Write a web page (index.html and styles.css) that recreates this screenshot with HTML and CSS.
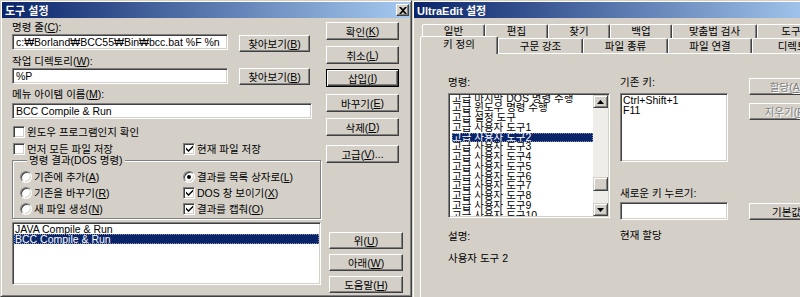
FILE: index.html
```html
<!DOCTYPE html>
<html lang="ko">
<head>
  <meta charset="UTF-8" />
  <title>도구 설정 / UltraEdit 설정</title>
  <link rel="stylesheet" href="styles.css">
</head>
<body>
  <div class="window tool-dlg">
    <div class="titlebar">
      <span>도구 설정</span>
      <span class="close-btn">
        <svg width="8" height="7" viewBox="0 0 8 7"><path d="M0 0h2l2 2 2-2h2L5 3.5 8 7H6L4 5 2 7H0l3-3.5z" fill="#000"/></svg>
      </span>
    </div>
    <div class="tool-body">
      <div class="tool-main">
        <div class="lbl first-lbl">명령 줄(<u>C</u>):</div>
        <div class="field-row">
          <div class="field path-field">c:₩Borland₩BCC55₩Bin₩bcc.bat %F %n</div>
          <div class="btn browse-btn first-browse">찾아보기(<u>B</u>)</div>
        </div>
        <div class="lbl dir-lbl">작업 디렉토리(<u>W</u>):</div>
        <div class="field-row">
          <div class="field path-field">%P</div>
          <div class="btn browse-btn">찾아보기(<u>B</u>)</div>
        </div>
        <div class="lbl name-lbl">메뉴 아이템 이름(<u>M</u>):</div>
        <div class="field name-field">BCC Compile &amp; Run</div>

        <div class="check-row first-check">
          <div class="opt"><span class="cb"></span>윈도우 프로그램인지 확인</div>
        </div>
        <div class="check-row second-check">
          <div class="opt"><span class="cb"></span>먼저 모든 파일 저장</div>
          <div class="opt"><span class="cb"><svg width="7" height="7" viewBox="0 0 7 7"><path d="M0 2.5l2.5 2.5L7 0.5v2L2.5 7 0 4.5z" fill="#000"/></svg></span>현재 파일 저장</div>
        </div>

        <fieldset class="result-group">
          <legend>명령 결과(DOS 명령)</legend>
          <div class="opt-row">
            <div class="opt"><span class="radio"></span>기존에 추가(<u>A</u>)</div>
            <div class="opt"><span class="radio on"></span>결과를 목록 상자로(<u>L</u>)</div>
          </div>
          <div class="opt-row">
            <div class="opt"><span class="radio"></span>기존을 바꾸기(<u>R</u>)</div>
            <div class="opt"><span class="cb"><svg width="7" height="7" viewBox="0 0 7 7"><path d="M0 2.5l2.5 2.5L7 0.5v2L2.5 7 0 4.5z" fill="#000"/></svg></span>DOS 창 보이기(<u>X</u>)</div>
          </div>
          <div class="opt-row">
            <div class="opt"><span class="radio"></span>새 파일 생성(<u>N</u>)</div>
            <div class="opt"><span class="cb"><svg width="7" height="7" viewBox="0 0 7 7"><path d="M0 2.5l2.5 2.5L7 0.5v2L2.5 7 0 4.5z" fill="#000"/></svg></span>결과를 캡춰(<u>O</u>)</div>
          </div>
        </fieldset>

        <div class="listbox tool-list">
          <div class="list-item">JAVA Compile &amp; Run</div>
          <div class="list-item selected">BCC Compile &amp; Run</div>
        </div>
      </div>

      <div class="tool-buttons">
        <div class="btn ok-btn">확인(<u>K</u>)</div>
        <div class="btn gap6">취소(<u>L</u>)</div>
        <div class="btn default gap5">삽입(<u>I</u>)</div>
        <div class="btn gap7">바꾸기(<u>E</u>)</div>
        <div class="btn gap6">삭제(<u>D</u>)</div>
        <div class="btn gap9">고급(<u>V</u>)...</div>
        <div class="btn lower up-btn">위(<u>U</u>)</div>
        <div class="btn lower gap5">아래(<u>W</u>)</div>
        <div class="btn lower gap5">도움말(<u>H</u>)</div>
      </div>
    </div>
  </div>

  <div class="window ue-dlg">
    <div class="titlebar ue-title">
      <span>UltraEdit 설정</span>
    </div>
    <div class="tabs">
      <div class="tab-row back-row">
        <div class="tab w63">일반</div>
        <div class="tab w63">편집</div>
        <div class="tab w62">찾기</div>
        <div class="tab w62">백업</div>
        <div class="tab w85">맞춤법 검사</div>
        <div class="tab w90">도구 모음</div>
      </div>
      <div class="tab-row front-row">
        <div class="tab w78 active">키 정의</div>
        <div class="tab w85">구문 강조</div>
        <div class="tab w85">파일 종류</div>
        <div class="tab w84">파일 연결</div>
        <div class="tab w90">디렉토리</div>
      </div>
    </div>
    <div class="ue-panel">
      <div class="col cmd-col">
        <div class="lbl">명령:</div>
        <div class="listbox cmd-list">
          <div class="cmd-items">
            <div class="cmd-item">고급 마지막 DOS 명령 수행</div>
            <div class="cmd-item">고급 윈도우 명령 수행</div>
            <div class="cmd-item">고급 설정 도구</div>
            <div class="cmd-item">고급 사용자 도구1</div>
            <div class="cmd-item selected">고급 사용자 도구2</div>
            <div class="cmd-item">고급 사용자 도구3</div>
            <div class="cmd-item">고급 사용자 도구4</div>
            <div class="cmd-item">고급 사용자 도구5</div>
            <div class="cmd-item">고급 사용자 도구6</div>
            <div class="cmd-item">고급 사용자 도구7</div>
            <div class="cmd-item">고급 사용자 도구8</div>
            <div class="cmd-item">고급 사용자 도구9</div>
            <div class="cmd-item">고급 사용자 도구10</div>
          </div>
          <div class="scrollbar">
            <div class="sb-btn"><svg width="7" height="4" viewBox="0 0 7 4"><path d="M0 4L3.5 0 7 4z" fill="#000"/></svg></div>
            <div class="sb-track">
              <div class="sb-thumb"></div>
            </div>
            <div class="sb-btn"><svg width="7" height="4" viewBox="0 0 7 4"><path d="M0 0h7L3.5 4z" fill="#000"/></svg></div>
          </div>
        </div>
        <div class="lbl desc-lbl">설명:</div>
        <div class="lbl desc-text">사용자 도구 2</div>
      </div>

      <div class="col key-col">
        <div class="lbl">기존 키:</div>
        <div class="listbox key-list">
          <div class="list-item">Ctrl+Shift+1</div>
          <div class="list-item">F11</div>
        </div>
        <div class="lbl new-key-lbl">새로운 키 누르기:</div>
        <div class="field new-key"></div>
        <div class="lbl cur-lbl">현재 할당</div>
      </div>

      <div class="col ue-buttons">
        <div class="btn disabled assign-btn">할당(<u>A</u>)</div>
        <div class="btn disabled clear-btn">지우기(<u>R</u>)</div>
        <div class="btn default-key-btn">기본값</div>
      </div>
    </div>
  </div>
</body>
</html>
```

FILE: styles.css
```css
body {
  margin: 0;
  width: 800px;
  height: 297px;
  overflow: hidden;
  display: flex;
  background: #d4d0c8;
  font-family: "Liberation Sans", "Noto Sans CJK KR", sans-serif;
  font-size: 10.5px;
  color: #000;
}
u {
  text-decoration-thickness: 1px;
  text-underline-offset: 1px;
}

/* windows */
.window {
  box-sizing: border-box;
  flex: none;
  background: #d4d0c8;
  border: 1px solid;
  border-color: #d4d0c8 #404040 #404040 #d4d0c8;
  box-shadow: inset 1px 1px #fff, inset -1px -1px #808080;
  padding: 1px;
}
.tool-dlg {
  width: 412px;
  height: 297px;
}
.ue-dlg {
  width: 430px;
  height: 330px;
}
.titlebar {
  height: 16px;
  display: flex;
  align-items: center;
  justify-content: space-between;
  padding: 0 1px 0 3px;
  background: linear-gradient(to right, #0a246a, #a6caf0);
  color: #fff;
  font-weight: bold;
  font-size: 11px;
  white-space: nowrap;
}
.close-btn {
  box-sizing: border-box;
  width: 13px;
  height: 12px;
  background: #d4d0c8;
  border: 1px solid;
  border-color: #fff #404040 #404040 #fff;
  box-shadow: inset -1px -1px #808080;
  display: flex;
  align-items: center;
  justify-content: center;
}

/* common controls */
.lbl {
  height: 13px;
  line-height: 13px;
  white-space: nowrap;
}
.field {
  box-sizing: border-box;
  height: 16px;
  background: #fff;
  border: 1px solid;
  border-color: #808080 #fff #fff #808080;
  box-shadow: inset 1px 1px #404040, inset -1px -1px #d4d0c8;
  padding: 0 3px;
  line-height: 14px;
  white-space: nowrap;
  overflow: hidden;
}
.btn {
  box-sizing: border-box;
  height: 18px;
  border: 1px solid;
  border-color: #fff #404040 #404040 #fff;
  box-shadow: inset -1px -1px #808080;
  display: flex;
  align-items: center;
  justify-content: center;
  white-space: nowrap;
}
.btn.default {
  border-color: #000;
  box-shadow: inset 1px 1px #fff, inset -1px -1px #404040, inset -2px -2px #808080;
}
.btn.disabled {
  color: #808080;
  text-shadow: 1px 1px #fff;
}
.listbox {
  box-sizing: border-box;
  background: #fff;
  border: 1px solid;
  border-color: #808080 #fff #fff #808080;
  box-shadow: inset 1px 1px #404040, inset -1px -1px #d4d0c8;
  padding: 1px;
  overflow: hidden;
}
.list-item {
  height: 10px;
  line-height: 10px;
  padding-left: 1px;
  white-space: nowrap;
}
.selected {
  background: #0a246a;
  color: #fff;
  outline: 1px dotted #8890b8;
  outline-offset: -1px;
}
.cb,
.radio {
  box-sizing: border-box;
  flex: none;
  width: 12px;
  height: 12px;
  margin-right: 2px;
  background: #fff;
  border: 1px solid;
  border-color: #808080 #fff #fff #808080;
  box-shadow: inset 1px 1px #404040, inset -1px -1px #d4d0c8;
  display: flex;
  align-items: center;
  justify-content: center;
}
.radio {
  border-radius: 50%;
}
.radio.on::after {
  content: "";
  width: 4px;
  height: 4px;
  border-radius: 50%;
  background: #000;
}

/* 도구 설정 */
.tool-body {
  display: flex;
  padding-left: 10px;
}
.tool-main {
  width: 309px;
  display: flex;
  flex-direction: column;
}
.first-lbl {
  margin-top: 3px;
}
.field-row {
  display: flex;
  align-items: flex-start;
  height: 18px;
}
.path-field {
  width: 216px;
}
.browse-btn {
  width: 71px;
  height: 17px;
  margin-left: 11px;
}
.first-browse {
  margin-top: 1px;
}
.dir-lbl {
  margin-top: 3px;
}
.name-lbl {
  margin-top: 2px;
}
.name-field {
  width: 300px;
  margin-top: 2px;
}
.check-row {
  display: flex;
  height: 13px;
  padding-left: 1px;
}
.check-row .opt:first-child {
  width: 170px;
}
.first-check {
  margin-top: 6px;
}
.second-check {
  margin-top: 4px;
}
.opt {
  display: flex;
  align-items: center;
  white-space: nowrap;
}
.result-group {
  margin: 0;
  min-width: 0;
  padding: 4px 0 3px 7px;
  border: 1px solid #808080;
  box-shadow: inset 1px 1px #fff, 1px 1px #fff;
}
.result-group legend {
  padding: 0 2px;
  margin-left: 7px;
  line-height: 11px;
  background: #d4d0c8;
}
.opt-row {
  display: flex;
  height: 13px;
}
.opt-row + .opt-row {
  margin-top: 3px;
}
.opt-row .opt:first-child {
  width: 163px;
}
.tool-list {
  margin-top: 3px;
  height: 63px;
  padding: 1px;
}
.tool-buttons {
  width: 77px;
  margin-left: 5px;
  display: flex;
  flex-direction: column;
}
.tool-buttons .btn {
  width: 73px;
}
.ok-btn {
  margin-top: 4px;
}
.gap5 {
  margin-top: 5px;
}
.gap6 {
  margin-top: 6px;
}
.gap7 {
  margin-top: 7px;
}
.gap9 {
  margin-top: 9px;
}
.tool-buttons .lower {
  width: 74px;
  height: 17px;
  margin-left: 3px;
}
.tool-buttons .up-btn {
  margin-top: 69px;
}

/* UltraEdit 설정 */
.ue-title {
  background: linear-gradient(to right, #0a246a, #a6caf0 95%);
}
.tabs {
  margin: 6px 0 0 6px;
}
.tab-row {
  display: flex;
  align-items: flex-end;
}
.back-row {
  height: 14px;
  padding-left: 2px;
}
.front-row {
  height: 15px;
}
.tab {
  box-sizing: border-box;
  flex: none;
  height: 14px;
  background: #d4d0c8;
  border: 1px solid;
  border-bottom: none;
  border-color: #fff #404040 #fff #fff;
  box-shadow: inset -1px 0 #808080;
  border-radius: 2px 2px 0 0;
  text-align: center;
  line-height: 13px;
  white-space: nowrap;
}
.front-row .tab {
  height: 15px;
  line-height: 14px;
}
.front-row .tab.active {
  position: relative;
  z-index: 1;
  height: 18px;
  margin: -2px 0 -1px;
  line-height: 15px;
}
.w62 { width: 62px; }
.w63 { width: 63px; }
.w78 { width: 78px; }
.w84 { width: 84px; }
.w85 { width: 85px; }
.w90 { width: 90px; }
.ue-panel {
  box-sizing: border-box;
  width: 410px;
  height: 260px;
  margin-left: 6px;
  border-top: 1px solid #fff;
  border-left: 1px solid #fff;
  padding: 22px 0 0 27px;
  display: flex;
}
.col {
  display: flex;
  flex-direction: column;
}
.cmd-col {
  width: 162px;
}
.cmd-list {
  margin-top: 4px;
  height: 125px;
  display: flex;
}
.cmd-items {
  flex: 1;
  overflow: hidden;
  padding-left: 2px;
}
.cmd-item {
  height: 9.75px;
  line-height: 9.75px;
  white-space: nowrap;
}
.cmd-item:first-child {
  margin-top: -1.5px;
}
.scrollbar {
  width: 15px;
  flex: none;
  display: flex;
  flex-direction: column;
  background: #eeede9;
}
.sb-btn,
.sb-thumb {
  box-sizing: border-box;
  height: 13px;
  background: #d4d0c8;
  border: 1px solid;
  border-color: #d4d0c8 #404040 #404040 #d4d0c8;
  box-shadow: inset 1px 1px #fff, inset -1px -1px #808080;
  display: flex;
  align-items: center;
  justify-content: center;
}
.sb-track {
  flex: 1;
  display: flex;
  flex-direction: column;
  justify-content: flex-end;
  padding-bottom: 12px;
}
.sb-thumb {
  height: 14px;
}
.desc-lbl {
  margin-top: 12px;
}
.desc-text {
  margin-top: 9px;
}
.key-col {
  width: 108px;
  margin-left: 10px;
}
.key-list {
  margin-top: 4px;
  height: 69px;
}
.new-key-lbl {
  margin-top: 25px;
}
.new-key {
  margin-top: 2px;
  height: 18px;
}
.cur-lbl {
  margin-top: 9px;
}
.ue-buttons {
  width: 75px;
  margin-left: 21px;
}
.ue-buttons .btn {
  height: 17px;
}
.assign-btn {
  margin-top: 2px;
}
.clear-btn {
  margin-top: 8px;
}
.default-key-btn {
  margin-top: 83px;
}
```
